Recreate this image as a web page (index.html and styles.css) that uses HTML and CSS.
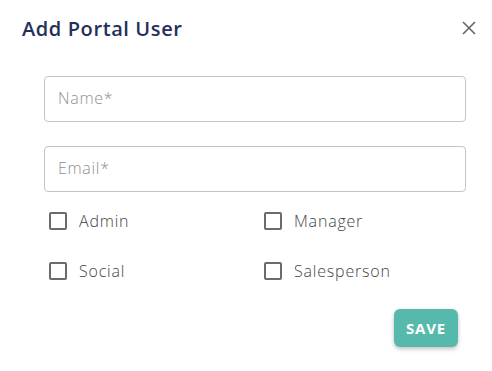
FILE: index.html
```html
<!DOCTYPE html>
<html lang="en">
<head>
  <meta charset="UTF-8">
  <meta name="viewport" content="width=device-width, initial-scale=1.0">
  <title>Add Portal User</title>
  <link rel="stylesheet" href="styles.css">
</head>
<body>
  <div class="dialog">
    <div class="dialog-header">
      <h2>Add Portal User</h2>
      <button class="close" aria-label="Close">
        <svg width="14" height="14" viewBox="0 0 14 14">
          <path d="M1 1 L13 13 M13 1 L1 13" stroke="#666" stroke-width="1.6" fill="none"/>
        </svg>
      </button>
    </div>

    <div class="dialog-body">
      <input type="text" class="field" placeholder="Name*">
      <input type="email" class="field" placeholder="Email*">

      <div class="roles">
        <label class="role"><span class="box"></span>Admin</label>
        <label class="role"><span class="box"></span>Manager</label>
        <label class="role"><span class="box"></span>Social</label>
        <label class="role"><span class="box"></span>Salesperson</label>
      </div>

      <div class="actions">
        <button class="save">SAVE</button>
      </div>
    </div>
  </div>
</body>
</html>
```

FILE: styles.css
```css
body {
  margin: 0;
  background-color: #fff;
  font-family: "Open Sans", Arial, sans-serif;
}
.dialog {
  width: 492px;
  height: 371px;
  box-sizing: border-box;
  padding: 14px 16px 0 22px;
}
.dialog-header {
  display: flex;
  justify-content: space-between;
  align-items: center;
  height: 28px;
}
h2 {
  margin: 0;
  font-size: 20px;
  font-weight: 600;
  letter-spacing: 0.6px;
  color: #252f5c;
}
.close {
  background: none;
  border: none;
  padding: 0;
  width: 14px;
  height: 14px;
  cursor: pointer;
  display: flex;
}
.dialog-body {
  padding: 34px 10px 0 22px;
}
.field {
  display: block;
  width: 100%;
  height: 46px;
  box-sizing: border-box;
  border: 1px solid #c4c4c4;
  border-radius: 4px;
  padding: 0 13px 3px;
  margin-bottom: 24px;
  font-family: inherit;
  font-size: 16px;
  font-weight: 300;
  letter-spacing: 0.7px;
  color: #333;
}
.field::placeholder {
  color: #8f8f8f;
}
.roles {
  display: grid;
  grid-template-columns: 215px 1fr;
  row-gap: 32px;
  margin-top: -4px;
  padding-left: 5px;
}
.role {
  display: flex;
  align-items: center;
  height: 18px;
  font-size: 16px;
  font-weight: 300;
  letter-spacing: 0.8px;
  color: #444;
}
.box {
  width: 14px;
  height: 14px;
  border: 2px solid #6b6b6b;
  border-radius: 2px;
  margin-right: 12px;
}
.actions {
  display: flex;
  justify-content: flex-end;
  margin-top: 29px;
  padding-right: 8px;
}
.save {
  width: 64px;
  height: 38px;
  background-color: #56b9ab;
  color: #fff;
  border: none;
  border-radius: 6px;
  font-family: inherit;
  font-weight: 700;
  font-size: 15px;
  letter-spacing: 0.8px;
  padding: 0;
  box-shadow: 0 2px 4px rgba(0,0,0,0.25);
  cursor: pointer;
}
```
